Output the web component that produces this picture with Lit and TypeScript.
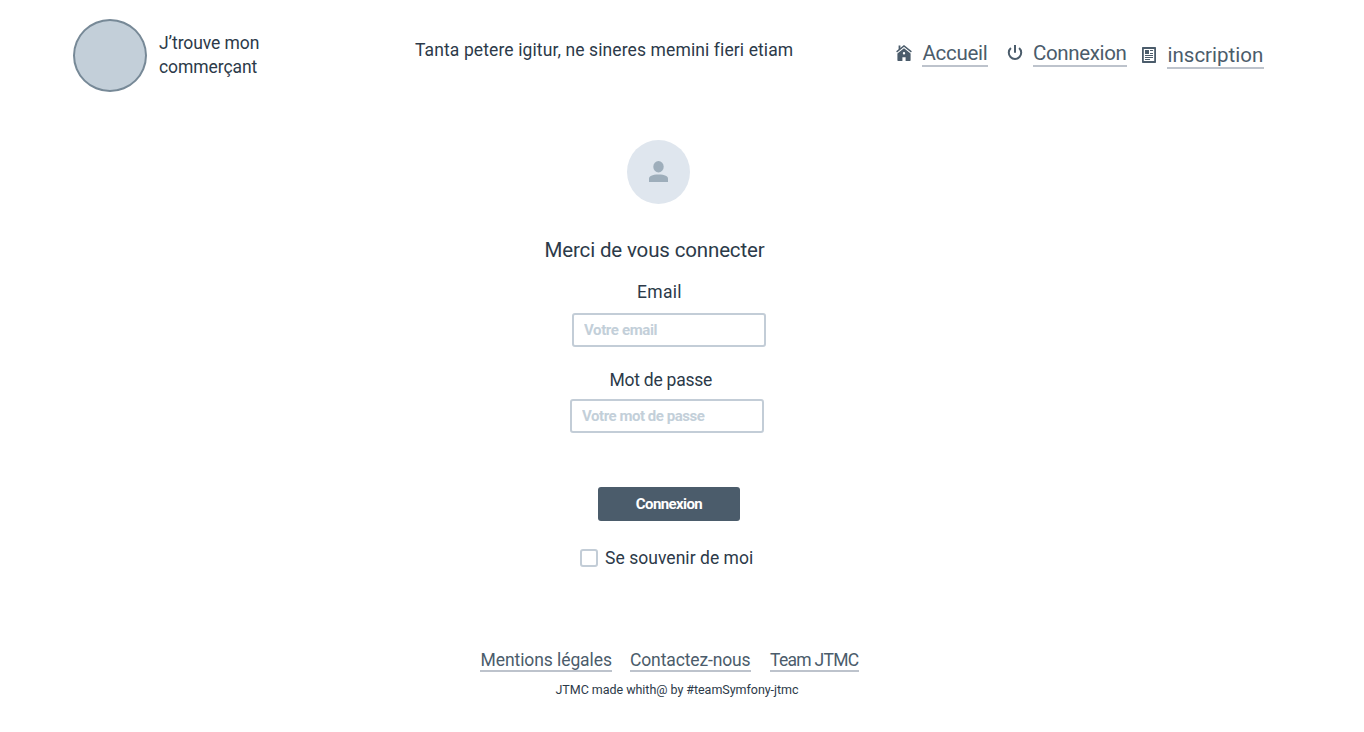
import { LitElement, html, css, svg } from "lit";
import { customElement } from "lit/decorators.js";

const homeIcon = html`<svg class="icon home" width="16" height="17" viewBox="0 0 16 17">
  ${svg`<path d="M0.6 6.9 L8 0.9 L15.4 6.9" fill="none" stroke="currentColor" stroke-width="1.4"/>
  <path d="M2.6 0.6 H4.4 V3.4 L2.6 4.9 Z" fill="currentColor"/>
  <path fill-rule="evenodd" fill="currentColor" d="M8 3.2 L14.6 8.5 V15.3 Q14.6 16 13.9 16 H9.6 V12.3 H6.4 V16 H2.1 Q1.4 16 1.4 15.3 V8.5 Z M8 7 A1.2 1.2 0 1 0 8 9.4 A1.2 1.2 0 1 0 8 7 Z"/>`}
</svg>`;

const powerIcon = html`<svg class="icon power" width="16" height="17" viewBox="0 0 16 17">
  ${svg`<path d="M3.9 3.1 A6.2 6.2 0 1 0 12.1 3.1 M8 0 V7.8" fill="none" stroke="currentColor" stroke-width="2"/>`}
</svg>`;

const articleIcon = html`<svg class="icon article" width="14" height="16" viewBox="0 0 14 16">
  ${svg`<path fill="currentColor" fill-rule="evenodd" d="M0.7 0 H13.3 Q14 0 14 0.7 V15.3 Q14 16 13.3 16 H0.7 Q0 16 0 15.3 V0.7 Q0 0 0.7 0 Z M1.8 2 V14 H12.2 V2 Z"/>
  <path fill="currentColor" d="M3 3 H7 V7 H3 Z M8 3 H11 V4 H8 Z M8 6 H11 V7 H8 Z M3 8 H11 V9 H3 Z M3 10 H11 V11 H3 Z M3 12 H8 V13 H3 Z"/>`}
</svg>`;

@customElement("app-root")
export class AppRoot extends LitElement {
  static styles = css`
    :host {
      display: flex;
      flex-direction: column;
      box-sizing: border-box;
      width: 1364px;
      height: 732px;
      overflow: hidden;
      background: #fff;
      color: #2c3a49;
      font: 400 17.5px/24px Roboto, "Liberation Sans", sans-serif;
      white-space: nowrap;
    }
    * { box-sizing: border-box; }
    .header { display: flex; align-items: flex-start; height: 110px; padding: 19px 0 0 73px; }
    .logo { width: 74px; height: 73px; border-radius: 50%; background: #c3cfd9; border: 2px solid #778997; }
    .brand { width: 110px; margin: 12px 0 0 12px; white-space: normal; letter-spacing: -0.08px; }
    .slogan { width: 480px; margin: 19px 0 0 146px; letter-spacing: 0.11px; }
    .nav { display: flex; align-items: flex-start; padding-top: 20px; margin-left: 1px; color: #4b5c6b; }
    .link {
      display: block;
      color: #4b5c6b;
      text-decoration: none;
      border-bottom: 2px solid #bdc3cc;
    }
    .nav .link { font-size: 20.5px; line-height: 28px; height: 28px; }
    .icon { display: block; flex: none; }
    .home { margin: 6px 10px 0 0; }
    .power { margin: 6px 10px 0 19px; }
    .article { margin: 8px 11px 0 15px; }
    .accueil { width: 66px; padding-left: 0.5px; letter-spacing: -0.28px; }
    .connexion { width: 94px; letter-spacing: -0.35px; }
    .nav .inscription { width: 97px; margin-top: 2px; padding-left: 0.5px; letter-spacing: 0; }
    .main { display: flex; flex-direction: column; align-items: flex-start; padding-top: 30px; }
    .avatar { display: block; margin-left: 627px; }
    .title { margin: 32px 0 0 544.5px; font-size: 20.5px; font-weight: 400; line-height: 28px; letter-spacing: -0.15px; }
    .label-email { margin: 16px 0 0 637px; letter-spacing: 0.3px; }
    .label-pass { margin: 21px 0 0 609.5px; letter-spacing: -0.25px; }
    .field {
      width: 194px;
      height: 34px;
      margin: 9px 0 0 572px;
      padding: 0 10px;
      border: 2px solid #c3cdd7;
      border-radius: 3px;
      background: #fff;
      color: #2c3a49;
      font: 700 15px/30px Roboto, "Liberation Sans", sans-serif;
      letter-spacing: -0.38px;
      outline: none;
    }
    .field::placeholder { color: #c3cfd9; opacity: 1; }
    .field.pass { margin: 7px 0 0 570px; letter-spacing: -0.46px; }
    .submit {
      width: 142px;
      height: 34px;
      margin: 54px 0 0 598px;
      padding: 0;
      border: 0;
      border-radius: 3px;
      background: #4b5c6b;
      color: #fff;
      font: 700 15px/34px Roboto, "Liberation Sans", sans-serif;
      letter-spacing: -0.6px;
    }
    .remember { display: flex; align-items: flex-start; margin: 25px 0 0 580px; letter-spacing: 0.04px; }
    .box { appearance: none; width: 18px; height: 18px; margin: 3px 7px 0 0; border: 2px solid #c3cdd7; border-radius: 3px; background: #fff; }
    .footer { padding-top: 78px; }
    .links { display: flex; gap: 18px; margin-left: 480px; }
    .links .link { height: 24px; }
    .legal { width: 132px; padding-left: 0.5px; letter-spacing: -0.08px; }
    .contact { width: 121px; letter-spacing: -0.13px; }
    .team { width: 89px; margin-left: 1px; letter-spacing: -0.7px; }
    .credit { margin: 9px 0 0 555.5px; font-size: 12.5px; line-height: 18px; letter-spacing: -0.04px; }
  `;

  render() {
    return html`
      <header class="header">
        <div class="logo"></div>
        <div class="brand">J’trouve mon<br />commerçant</div>
        <div class="slogan">Tanta petere igitur, ne sineres memini fieri etiam</div>
        <nav class="nav">
          ${homeIcon}<a class="link accueil">Accueil</a>
          ${powerIcon}<a class="link connexion">Connexion</a>
          ${articleIcon}<a class="link inscription">inscription</a>
        </nav>
      </header>
      <main class="main">
        <svg class="avatar" width="63" height="64" viewBox="0 0 63 64">
          <ellipse cx="31.5" cy="32" rx="31.5" ry="32" fill="#dfe6ee" />
          <ellipse cx="31.5" cy="26.8" rx="5.2" ry="5.7" fill="#9eaebb" />
          <path d="M22 42 V38.6 C22 36 25 34.4 31.5 34.4 C38 34.4 41 36 41 38.6 V42 Z" fill="#9eaebb" />
        </svg>
        <h1 class="title">Merci de vous connecter</h1>
        <label class="label-email" for="email">Email</label>
        <input class="field" id="email" type="text" placeholder="Votre email" />
        <label class="label-pass" for="pass">Mot de passe</label>
        <input class="field pass" id="pass" type="password" placeholder="Votre mot de passe" />
        <button class="submit" type="button">Connexion</button>
        <label class="remember"><input class="box" type="checkbox" />Se souvenir de moi</label>
      </main>
      <footer class="footer">
        <div class="links">
          <a class="link legal">Mentions légales</a>
          <a class="link contact">Contactez-nous</a>
          <a class="link team">Team JTMC</a>
        </div>
        <div class="credit">JTMC made whith@ by #teamSymfony-jtmc</div>
      </footer>
    `;
  }
}
